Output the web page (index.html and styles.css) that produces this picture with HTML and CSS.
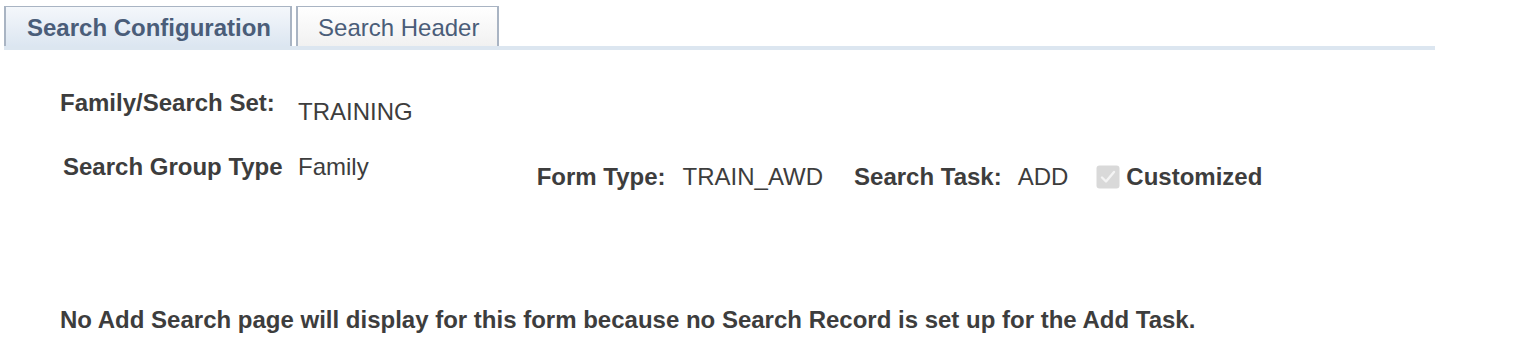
FILE: index.html
```html
<!DOCTYPE html>
<html lang="en">
<head>
  <meta charset="UTF-8">
  <title>Search Configuration</title>
  <link rel="stylesheet" href="styles.css">
</head>
<body>
  <div class="tabs">
    <div class="tab active">Search Configuration</div>
    <div class="tab">Search Header</div>
  </div>
  <div class="tab-band"></div>

  <div class="content">
    <div class="row row-set">
      <span class="label label-set">Family/Search Set:</span>
      <span class="value value-set">TRAINING</span>
    </div>
    <div class="row row-group">
      <span class="label label-group">Search Group Type</span>
      <span class="value value-group">Family</span>
      <div class="details">
        <span class="label">Form Type:</span>
        <span class="value form-type">TRAIN_AWD</span>
        <span class="label label-task">Search Task:</span>
        <span class="value task">ADD</span>
        <span class="check">
          <svg width="24" height="24" viewBox="0 0 24 24">
            <rect x="0.5" y="0.5" width="23" height="23" rx="3" fill="#d9d9d9"/>
            <path d="M6 12.5 L10 16.5 L18 7" fill="none" stroke="#f4f4f4" stroke-width="2.4" stroke-linecap="round" stroke-linejoin="round"/>
          </svg>
        </span>
        <span class="label">Customized</span>
      </div>
    </div>
    <p class="note">No Add Search page will display for this form because no Search Record is set up for the Add Task.</p>
  </div>
</body>
</html>
```

FILE: styles.css
```css
body {
  margin: 0;
  font-family: "Liberation Sans", Arial, sans-serif;
  color: #3d3d3d;
  background: #fff;
}
.tabs {
  display: flex;
  gap: 4px;
  padding: 6px 0 0 4px;
}
.tab {
  height: 39px;
  line-height: 42px;
  border: solid #a9b4c3;
  border-width: 1px 2px 0 2px;
  font-size: 24px;
  color: #4a5d79;
  background: linear-gradient(#ffffff, #f1f1f1);
  padding: 0 18px 0 20px;
}
.tab.active {
  font-weight: bold;
  background: linear-gradient(#f4f7fb, #dce6f1);
  padding: 0 19px 0 21px;
}
.tab-band {
  margin-left: 4px;
  width: 1431px;
  height: 4px;
  background: #dce6f0;
}
.content {
  padding-left: 60px;
}
.label {
  font-weight: bold;
  font-size: 24px;
  line-height: 28px;
}
.value {
  font-size: 24px;
  line-height: 28px;
}
.row {
  display: flex;
  align-items: flex-start;
}
.row-set {
  margin-top: 39px;
}
.label-set {
  width: 238px;
}
.value-set {
  margin-top: 9px;
}
.row-group {
  margin-top: 27px;
}
.label-group {
  margin-left: 3px;
  width: 235px;
}
.details {
  display: flex;
  align-items: center;
  margin-left: 168px;
  margin-top: 10px;
}
.form-type {
  margin-left: 17px;
}
.label-task {
  margin-left: 31px;
}
.task {
  margin-left: 16px;
}
.check {
  display: flex;
  margin: 0 6px 0 28px;
}
.note {
  margin: 115px 0 0 0;
  font-weight: bold;
  font-size: 24px;
  line-height: 28px;
}
```
